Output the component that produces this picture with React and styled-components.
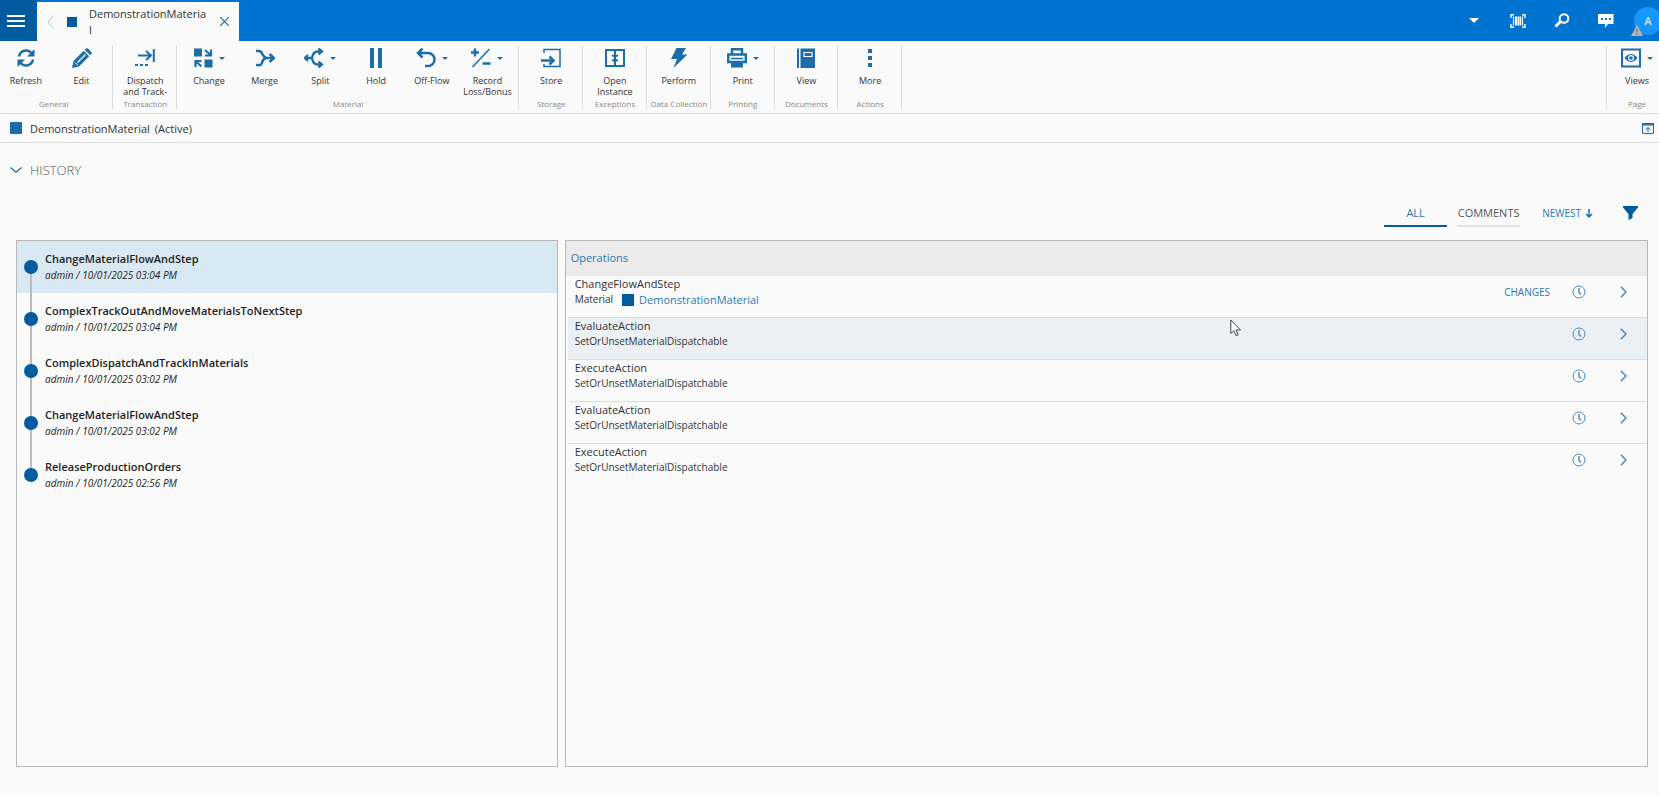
import React from "react";
import styled, { createGlobalStyle, css } from "styled-components";

const GlobalStyle = createGlobalStyle`
  *, *::before, *::after { box-sizing: border-box; }
  body { margin: 0; background: #fafafa; color: #333; font-family: "Open Sans", "Noto Sans", sans-serif; font-size: 11px; }
  button { font: inherit; color: inherit; background: none; border: 0; padding: 0; margin: 0; cursor: pointer; }
  h1, h2, h3, p, ul, ol { margin: 0; padding: 0; font-weight: 400; list-style: none; }
  svg { display: block; flex: none; }
`;

const c = {
  bar: "#0072d0",
  deep: "#005c9f",
  icon: "#1d6da6",
  link: "#2b78b4",
  line: "#dcdcdc",
  panel: "#b9b9b9",
};

const Page = styled.div`
  min-height: 100vh;
  display: flex;
  flex-direction: column;
  overflow: hidden;
`;

/* top bar */
const TopBar = styled.header`
  height: 41px;
  display: flex;
  background: ${c.bar};
  color: #fff;
`;
const MenuButton = styled.button`
  width: 37px;
  display: flex;
  align-items: center;
  padding-left: 7px;
  background: ${c.deep};
`;
const Tab = styled.div`
  width: 202px;
  margin-top: 2px;
  padding: 0 10px;
  display: flex;
  align-items: center;
  background: #fafafa;
  color: #333;
`;
const TabTitle = styled.span`
  flex: 1;
  margin: 0 12px 0 12px;
  font-size: 11px;
  line-height: 16px;
  word-break: break-all;
`;
const Square = styled.span`
  flex: none;
  width: ${(p) => p.$size}px;
  height: ${(p) => p.$size}px;
  background: ${(p) => p.$color || c.deep};
`;
const BackButton = styled.button`
  margin-right: 13px;
`;
const TopActions = styled.div`
  margin-left: auto;
  margin-right: -3px;
  display: flex;
  align-items: center;
`;
const TopAction = styled.button`
  width: 44px;
  height: 41px;
  display: flex;
  align-items: center;
  justify-content: center;
`;
const Avatar = styled.button`
  position: relative;
  width: 28px;
  height: 28px;
  margin-left: 6px;
  border-radius: 50%;
  background: #1597ff;
  color: #fff;
  font-size: 11px;
`;
const Warning = styled.svg`
  position: absolute;
  left: -3px;
  bottom: -1px;
`;

/* ribbon */
const Ribbon = styled.nav`
  display: flex;
  justify-content: space-between;
  height: 73px;
  border-bottom: 1px solid ${c.line};
`;
const Groups = styled.div`
  display: flex;
  flex: 0 1 904px;
  min-width: 0;
  margin-left: -2px;
`;
const Group = styled.section`
  flex: 0 1 auto;
  min-width: 0;
  margin: 4px 0;
  padding: 0 3px 0 ${(p) => (p.$edge ? 0 : 4)}px;
  display: flex;
  flex-direction: column;
  justify-content: space-between;
  border-right: 1px solid ${c.line};
`;
const PageGroup = styled(Group)`
  flex: none;
  margin-right: -6px;
  border-right: 0;
  border-left: 1px solid ${c.line};
  padding: 0 0 0 2px;
`;
const GroupButtons = styled.div`
  display: flex;
`;
const RibbonButton = styled.button`
  flex: 0 1 56px;
  width: 56px;
  min-width: 0;
  display: flex;
  flex-direction: column;
  align-items: center;
`;
const IconSlot = styled.span`
  height: 26px;
  display: flex;
  align-items: center;
  gap: 6px;
`;
const Caret = styled.span`
  border: 3px solid transparent;
  border-top-color: ${c.icon};
  border-bottom: 0;
`;
const ButtonLabel = styled.span`
  margin-top: 4px;
  font-size: 9px;
  line-height: 11px;
  white-space: pre-line;
  text-align: center;
`;
const GroupLabel = styled.h3`
  font-size: 8px;
  line-height: 10px;
  color: #8a8a8a;
  text-align: center;
  white-space: nowrap;
`;

/* entity header */
const EntityBar = styled.div`
  height: 29px;
  display: flex;
  align-items: center;
  padding: 0 5px 0 10px;
  border-bottom: 1px solid ${c.line};
`;
const EntityName = styled.h1`
  margin: 0 5px 0 8px;
  font-size: 11px;
`;
const EntityState = styled.span`
  flex: 1;
  font-size: 11px;
`;

const SectionToggle = styled.button`
  align-self: flex-start;
  margin: 15px 0 0 10px;
  height: 24px;
  display: flex;
  align-items: center;
  gap: 8px;
  font-size: 13px;
  font-weight: 300;
  color: #555;
`;

/* filters */
const Filters = styled.div`
  display: flex;
  justify-content: flex-end;
  align-items: center;
  height: 28px;
  margin: 17px 21px 13px 0;
`;
const FilterTab = styled.button`
  width: 63px;
  height: 28px;
  margin-right: 10px;
  font-size: 11px;
  border-bottom: 2px solid ${(p) => (p.$active ? c.deep : "#e2e2e2")};
  color: ${(p) => (p.$active ? c.link : "#555")};
`;
const SortButton = styled.button`
  display: flex;
  align-items: center;
  gap: 4px;
  margin: 0 30px 0 12px;
  font-size: 10px;
  color: ${c.link};
`;

/* panels */
const Panels = styled.main`
  flex: 1;
  display: grid;
  grid-template-columns: minmax(0, 1fr) minmax(0, 2fr);
  gap: 7px;
  margin: 0 11px 28px 16px;
`;
const Panel = styled.section`
  border: 1px solid ${c.panel};
`;
const Entry = styled.li`
  & + & > button::before { top: 0; }
  &:last-child > button::before { bottom: 26px; }
`;
const EntryButton = styled.button`
  position: relative;
  width: 100%;
  height: 52px;
  padding: 0 0 0 7px;
  display: flex;
  align-items: center;
  gap: 7px;
  text-align: left;
  background: ${(p) => (p.$selected ? "#d9e9f4" : "none")};
  &::before {
    content: "";
    position: absolute;
    left: 13px;
    top: 26px;
    bottom: 0;
    width: 2px;
    background: #bcbcbc;
  }
`;
const Dot = styled.span`
  position: relative;
  width: 14px;
  height: 14px;
  border-radius: 50%;
  background: ${c.deep};
`;
const EntryText = styled.span`
  display: flex;
  flex-direction: column;
  color: #222;
`;
const EntryTitle = styled.span`
  font-size: 11px;
  font-weight: 600;
  line-height: 16px;
`;
const EntryMeta = styled.span`
  font-size: 10px;
  font-style: italic;
  line-height: 16px;
`;

const PanelTitle = styled.h2`
  height: 35px;
  padding-left: 5px;
  font-size: 11px;
  line-height: 34px;
  background: #ebebeb;
  color: ${c.link};
`;
const Operation = styled.li`
  position: relative;
  height: 42px;
  margin-left: 2px;
  padding: 0 20px 0 7px;
  display: flex;
  justify-content: space-between;
  border-bottom: 1px solid ${c.line};
  ${(p) => p.$hover && css`background: #eceff4;`}
  &:last-child { border-bottom: 0; }
`;
const OperationTitle = styled.p`
  font-size: 11px;
  line-height: 16px;
`;
const OperationDetail = styled.p`
  display: flex;
  align-items: center;
  font-size: 10px;
  line-height: 15px;
`;
const MaterialLink = styled.a`
  display: flex;
  align-items: center;
  gap: 5px;
  margin-left: 9px;
  font-size: 11px;
  color: ${c.link};
  text-decoration: none;
`;
const OperationActions = styled.div`
  display: flex;
  align-items: center;
  height: 32px;
  color: ${c.link};
`;
const ChangesButton = styled.button`
  margin-right: 22px;
  font-size: 10px;
`;
const ClockButton = styled.button`
  margin-right: 34px;
`;
const Pointer = styled.svg`
  position: absolute;
  left: 662px;
  top: 1px;
`;

const Glyph = ({ children }) => (
  <svg width="20" height="20" viewBox="0 0 20 20" fill="none" stroke={c.icon} strokeWidth="2.5" aria-hidden="true">
    {children}
  </svg>
);

const icons = {
  refresh: (
    <Glyph>
      <path d="M3 8.500a7.200 7.200 0 0 1 12.500-3.500M17 11.500a7.200 7.200 0 0 1-12.500 3.500" />
      <path d="M18.500 1v7.500H11zM1.500 19v-7.500H9z" fill={c.icon} stroke="none" />
    </Glyph>
  ),
  edit: (
    <Glyph>
      <path d="M0 20l1.500-7L11.700 2.800l5.500 5.500L7 18.500zM12.700 1.800 14 .6q1-.8 2 0l3.400 3.400q.8 1 0 2L18.200 7.300z" fill={c.icon} stroke="none" />
      <path d="M5.500 14.500l8-8" stroke="#fafafa" strokeWidth="1.200" />
      <path d="M3 14.500l2.800 2.800" stroke="#fafafa" strokeWidth="1" />
    </Glyph>
  ),
  dispatch: (
    <Glyph>
      <path d="M3 7.500h13M11 3l5 4.500-5 4.500M18.800 1v13" strokeWidth="2" />
      <path d="M0 17h3M5 17h3M10 17h3" strokeWidth="2" />
    </Glyph>
  ),
  change: (
    <Glyph>
      <path d="M1 .5h8v8H1zM11.500 11.500h8v8h-8z" fill={c.icon} stroke="none" />
      <path d="M12 2l5.500 5M18 1.500v6h-6M8.500 18.500l-5.500-5M2.500 19v-6h6" strokeWidth="2.200" />
    </Glyph>
  ),
  merge: (
    <Glyph>
      <path d="M1 3h3q2 0 3 2.500T11 10q-3 1-4 4.500T4 17H1M10 10h8M14.500 6l4.500 4-4.500 4" />
    </Glyph>
  ),
  split: (
    <Glyph>
      <path d="M1 10h7M17 3.500h-3Q9 3.500 8 10q1 6.500 6 6.500h3M14.500.5l3.500 3-3.500 3M14.500 13.500l3.500 3-3.500 3M4 7 1 10l3 3" strokeWidth="2.300" />
    </Glyph>
  ),
  hold: (
    <Glyph>
      <path d="M6 0v20M14 0v20" strokeWidth="4" />
    </Glyph>
  ),
  offflow: (
    <Glyph>
      <path d="M2 5h10a6.500 6.500 0 0 1 0 13H9M6.500.5 2 5l4.500 4.500" />
    </Glyph>
  ),
  record: (
    <Glyph>
      <path d="M0 4.500h8M4 .5v8M11.500 15.500h8" />
      <path d="M1.500 19 18.500 1" strokeWidth="1.500" />
    </Glyph>
  ),
  store: (
    <Glyph>
      <path d="M3 5V1.500h16v17H3V16" strokeWidth="1.500" />
      <path d="M0 12.500h12M8.500 8.500l4 4-4 4" />
    </Glyph>
  ),
  open: (
    <Glyph>
      <path d="M1 2h18v16H1zM10 2v16" strokeWidth="2" />
      <path d="M7 7l3 2 3-2M7 13l3-2 3 2" strokeWidth="1.800" />
    </Glyph>
  ),
  perform: (
    <Glyph>
      <path d="M7.500 0H17l-4 6.500h5.500L4.500 20l3.500-9H2z" fill={c.icon} stroke="none" />
    </Glyph>
  ),
  print: (
    <Glyph>
      <path d="M5 7V1.200h10V7M1.200 6.500h17.600V14H1.200z" strokeWidth="2.400" />
      <path d="M4 10.500h12" strokeWidth="1.500" />
      <path d="M4 14h12v5.500H4z" fill={c.icon} stroke="none" />
    </Glyph>
  ),
  view: (
    <Glyph>
      <path d="M1 .5h2V20H1zM4.500.5H19V20H4.500z" fill={c.icon} stroke="none" />
      <path d="M8 4.500h8M8 4v4.500h8V4" stroke="#fafafa" strokeWidth="1.200" />
    </Glyph>
  ),
  more: (
    <Glyph>
      <path d="M8 1h4v4H8zM8 8h4v4H8zM8 15h4v4H8z" fill={c.icon} stroke="none" />
    </Glyph>
  ),
  views: (
    <Glyph>
      <path d="M1 1.500h18v17H1z" strokeWidth="2" />
      <path d="M3.500 10q6.500-8 13 0-6.500 8-13 0z" fill={c.icon} stroke="none" />
      <circle cx="10" cy="10" r="2.400" stroke="#fafafa" strokeWidth="1.200" fill={c.icon} />
    </Glyph>
  ),
};

const groups = [
  { name: "General", items: [["Refresh", "refresh"], ["Edit", "edit"]] },
  { name: "Transaction", items: [["Dispatch\nand Track-", "dispatch"]] },
  {
    name: "Material",
    items: [
      ["Change", "change", true],
      ["Merge", "merge"],
      ["Split", "split", true],
      ["Hold", "hold"],
      ["Off-Flow", "offflow", true],
      ["Record\nLoss/Bonus", "record", true],
    ],
  },
  { name: "Storage", items: [["Store", "store"]] },
  { name: "Exceptions", items: [["Open\nInstance", "open"]] },
  { name: "Data Collection", items: [["Perform", "perform"]] },
  { name: "Printing", items: [["Print", "print", true]] },
  { name: "Documents", items: [["View", "view"]] },
  { name: "Actions", items: [["More", "more"]] },
];

const history = [
  ["ChangeMaterialFlowAndStep", "admin / 10/01/2025 03:04 PM"],
  ["ComplexTrackOutAndMoveMaterialsToNextStep", "admin / 10/01/2025 03:04 PM"],
  ["ComplexDispatchAndTrackInMaterials", "admin / 10/01/2025 03:02 PM"],
  ["ChangeMaterialFlowAndStep", "admin / 10/01/2025 03:02 PM"],
  ["ReleaseProductionOrders", "admin / 10/01/2025 02:56 PM"],
];

const operations = [
  { title: "ChangeFlowAndStep", material: "DemonstrationMaterial" },
  { title: "EvaluateAction", detail: "SetOrUnsetMaterialDispatchable", hover: true },
  { title: "ExecuteAction", detail: "SetOrUnsetMaterialDispatchable" },
  { title: "EvaluateAction", detail: "SetOrUnsetMaterialDispatchable" },
  { title: "ExecuteAction", detail: "SetOrUnsetMaterialDispatchable" },
];

function RibbonItem({ label, icon, menu }) {
  return (
    <RibbonButton>
      <IconSlot>
        {icons[icon]}
        {menu && <Caret />}
      </IconSlot>
      <ButtonLabel>{label}</ButtonLabel>
    </RibbonButton>
  );
}

function Header() {
  return (
    <TopBar>
      <MenuButton aria-label="Menu">
        <svg width="18" height="14" viewBox="0 0 18 14" stroke="#fff" strokeWidth="2"><path d="M0 2h18M0 7h18M0 12h18" /></svg>
      </MenuButton>
      <Tab>
        <BackButton aria-label="Back">
          <svg width="7" height="14" viewBox="0 0 7 14" fill="none" stroke="#a9c6dc"><path d="M6.500.5 1 7l5.500 6.500" /></svg>
        </BackButton>
        <Square $size={10} />
        <TabTitle>DemonstrationMaterial</TabTitle>
        <button aria-label="Close tab">
          <svg width="9" height="9" viewBox="0 0 9 9" stroke={c.icon} strokeWidth="1.200"><path d="M0 0l9 9M9 0 0 9" /></svg>
        </button>
      </Tab>
      <TopActions>
        <TopAction aria-label="Open tabs">
          <svg width="10" height="5" viewBox="0 0 10 5" fill="#fff"><path d="M0 0h10L5 5z" /></svg>
        </TopAction>
        <TopAction aria-label="Scan">
          <svg width="16" height="14" viewBox="0 0 16 14" fill="none" stroke="#fff">
            <path d="M1 4V.7h3M12 .7h3V4M15 10v3.300h-3M4 13.300H1V10" strokeWidth="1.400" />
            <path d="M3.500 2.500v9M12.500 2.500v9M10.500 2.500v9" strokeWidth="1.200" />
            <path d="M6 2.500v9M8.500 2.500v9" strokeWidth="2" />
          </svg>
        </TopAction>
        <TopAction aria-label="Search">
          <svg width="16" height="15" viewBox="0 0 16 15" fill="none" stroke="#fff"><circle cx="10" cy="5.500" r="4.300" strokeWidth="2" /><path d="M6.500 8.500 1.500 13.500" strokeWidth="3" /></svg>
        </TopAction>
        <TopAction aria-label="Messages">
          <svg width="16" height="14" viewBox="0 0 16 14"><path d="M0 0h15.500v10H10l-3 4v-4H0z" fill="#fff" /><path d="M3 5h2M7 5h2M11 5h2" stroke={c.bar} strokeWidth="2" /></svg>
        </TopAction>
        <Avatar aria-label="Account">
          A
          <Warning width="12" height="11" viewBox="0 0 12 11"><path d="M6 0l6 11H0z" fill="#b9b4ae" /><path d="M6 4v3.500M6 8.500V10" stroke="#666" /></Warning>
        </Avatar>
      </TopActions>
    </TopBar>
  );
}

export default function App() {
  return (
    <Page>
      <GlobalStyle />
      <Header />
      <Ribbon>
        <Groups>
          {groups.map((g, i) => (
            <Group key={g.name} $edge={i === 0}>
              <GroupButtons>
                {g.items.map(([label, icon, menu]) => (
                  <RibbonItem key={label} label={label} icon={icon} menu={menu} />
                ))}
              </GroupButtons>
              <GroupLabel>{g.name}</GroupLabel>
            </Group>
          ))}
        </Groups>
        <PageGroup>
          <GroupButtons>
            <RibbonItem label="Views" icon="views" menu />
          </GroupButtons>
          <GroupLabel>Page</GroupLabel>
        </PageGroup>
      </Ribbon>
      <EntityBar>
        <Square $size={12} $color={c.icon} />
        <EntityName>DemonstrationMaterial</EntityName>
        <EntityState>(Active)</EntityState>
        <button aria-label="Show details">
          <svg width="12" height="11" viewBox="0 0 12 11" fill="none" stroke={c.icon}>
            <path d="M.5.5h11v10H.5zM6 9V4.500M3.500 6.500 6 4.500l2.500 2" /><path d="M0 1.500h12" strokeWidth="2" />
          </svg>
        </button>
      </EntityBar>
      <SectionToggle aria-expanded="true">
        <svg width="12" height="6" viewBox="0 0 12 6" fill="none" stroke={c.icon} strokeWidth="1.300"><path d="M.5.5 6 5.200 11.500.5" /></svg>
        HISTORY
      </SectionToggle>
      <Filters>
        <FilterTab $active>ALL</FilterTab>
        <FilterTab>COMMENTS</FilterTab>
        <SortButton>
          NEWEST
          <svg width="8" height="9" viewBox="0 0 8 9" fill="none" stroke={c.icon} strokeWidth="1.500"><path d="M4 0v8M1 5l3 3 3-3" /></svg>
        </SortButton>
        <button aria-label="Filter">
          <svg width="15" height="14" viewBox="0 0 15 14" fill={c.deep}><path d="M0 0h15v1.500L9.500 8v4L5.500 14V8L0 1.500z" /></svg>
        </button>
      </Filters>
      <Panels>
        <Panel>
          <ol>
            {history.map(([title, meta], i) => (
              <Entry key={i}>
                <EntryButton $selected={i === 0}>
                  <Dot />
                  <EntryText>
                    <EntryTitle>{title}</EntryTitle>
                    <EntryMeta>{meta}</EntryMeta>
                  </EntryText>
                </EntryButton>
              </Entry>
            ))}
          </ol>
        </Panel>
        <Panel>
          <PanelTitle>Operations</PanelTitle>
          <ul>
            {operations.map((op, i) => (
              <Operation key={i} $hover={op.hover}>
                <div>
                  <OperationTitle>{op.title}</OperationTitle>
                  {op.material ? (
                    <OperationDetail>
                      Material
                      <MaterialLink href="#material"><Square $size={12} />{op.material}</MaterialLink>
                    </OperationDetail>
                  ) : (
                    <OperationDetail>{op.detail}</OperationDetail>
                  )}
                </div>
                <OperationActions>
                  {op.material && <ChangesButton>CHANGES</ChangesButton>}
                  <ClockButton aria-label="Timing">
                    <svg width="14" height="14" viewBox="0 0 14 14" fill="none" stroke="#4f88b3"><circle cx="7" cy="7" r="6" /><path d="M7 3v4.500l2 2" strokeWidth="1.400" /></svg>
                  </ClockButton>
                  <button aria-label="Open">
                    <svg width="7" height="12" viewBox="0 0 7 12" fill="none" stroke="#4f88b3" strokeWidth="1.500"><path d="M.8.8 6 6 .8 11.200" /></svg>
                  </button>
                </OperationActions>
                {op.hover && (
                  <Pointer width="12" height="18" viewBox="0 0 12 18" fill="#fff" stroke="#444"><path d="M.8 1v13.500l3-2.800 2.200 5 2.200-1-2.200-4.700h4.500z" /></Pointer>
                )}
              </Operation>
            ))}
          </ul>
        </Panel>
      </Panels>
    </Page>
  );
}
